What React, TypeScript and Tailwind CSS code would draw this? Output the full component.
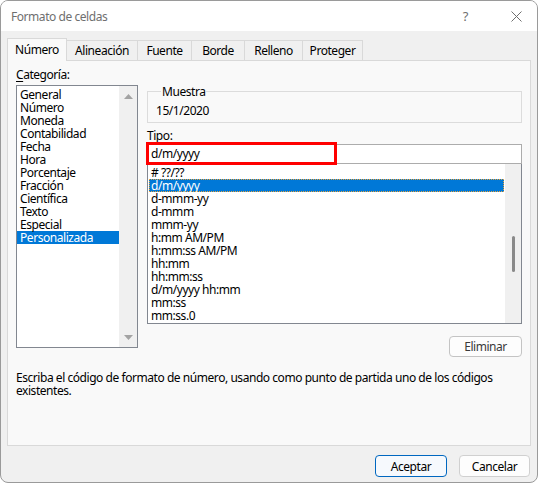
import React from 'react';

const categories = [
  'General',
  'Número',
  'Moneda',
  'Contabilidad',
  'Fecha',
  'Hora',
  'Porcentaje',
  'Fracción',
  'Científica',
  'Texto',
  'Especial',
  'Personalizada',
];

const formats = [
  '# ??/??',
  'd/m/yyyy',
  'd-mmm-yy',
  'd-mmm',
  'mmm-yy',
  'h:mm AM/PM',
  'h:mm:ss AM/PM',
  'hh:mm',
  'hh:mm:ss',
  'd/m/yyyy hh:mm',
  'mm:ss',
  'mm:ss.0',
];

const tabs = [
  { label: 'Número', w: 'w-[60px]' },
  { label: 'Alineación', w: 'w-[71px]' },
  { label: 'Fuente', w: 'w-[54px]' },
  { label: 'Borde', w: 'w-[53px]' },
  { label: 'Relleno', w: 'w-[58px]' },
  { label: 'Proteger', w: 'w-[60px]' },
];

const Triangle: React.FC<{ down?: boolean }> = ({ down }) => (
  <svg width="9" height="5" viewBox="0 0 9 5">
    {down ? <polygon points="0,0 9,0 4.5,5" fill="#a3a3a3" /> : <polygon points="0,5 9,5 4.5,0" fill="#a3a3a3" />}
  </svg>
);

export default function App() {
  return (
    <div className="w-[540px] h-[484px] bg-white text-[12px] leading-[13px] tracking-[-0.45px] text-black font-['Segoe_UI','Noto_Sans',sans-serif]">
      <div className="w-[538px] h-[483px] border border-[#9a9a9a] rounded-[8px] overflow-hidden flex flex-col bg-[#f0f0f0]">
        {/* Title bar */}
        <div className="h-[30px] shrink-0 bg-white flex items-center pl-[10px] pr-[15px] text-[#6f6f6f]">
          <span className="flex-1">Formato de celdas</span>
          <span className="mr-[43px] text-[13px]">?</span>
          <svg width="11" height="11" viewBox="0 0 11 11">
            <path d="M0.5 0.5 L10.5 10.5 M10.5 0.5 L0.5 10.5" stroke="#6f6f6f" strokeWidth="1" />
          </svg>
        </div>

        {/* Body */}
        <div className="flex-1 pl-[6px] pr-[6px] pt-[7px] flex flex-col">
          {/* Tabs */}
          <div className="flex items-end relative z-10 -mb-px">
            {tabs.map((t, i) =>
              i === 0 ? (
                <div
                  key={t.label}
                  className={`${t.w} h-[23px] bg-[#f9f9f9] border border-b-0 border-[#d9d9d9] flex items-center justify-center pb-[2px]`}
                >
                  {t.label}
                </div>
              ) : (
                <div
                  key={t.label}
                  className={`${t.w} h-[21px] bg-[#f0f0f0] border border-l-0 border-[#d9d9d9] flex items-center justify-center`}
                >
                  {t.label}
                </div>
              )
            )}
          </div>

          {/* Panel */}
          <div className="h-[386px] border border-[#d9d9d9] bg-[#f9f9f9] px-[8px] pt-[7px]">
            <div className="flex gap-[9px]">
              {/* Category column */}
              <div className="w-[122px] flex flex-col">
                <div className="h-[13px] mb-[4px]">
                  <span className="underline underline-offset-2">C</span>ategoría:
                </div>
                <div className="h-[263px] border border-[#828790] bg-white flex">
                  <div className="flex-1 pt-[2px]">
                    {categories.map((c) => (
                      <div
                        key={c}
                        className={`h-[13px] pl-[3px] ${c === 'Personalizada' ? 'bg-[#0078d7] text-white' : ''}`}
                      >
                        {c}
                      </div>
                    ))}
                  </div>
                  <div className="w-[18px] bg-[#f0f0f0] flex flex-col items-center justify-between pt-[8px] pb-[7px]">
                    <Triangle />
                    <Triangle down />
                  </div>
                </div>
              </div>

              {/* Right column */}
              <div className="w-[375px] flex flex-col pt-[17px]">
                <fieldset className="border border-[#dcdcdc] pl-[8px] pb-[5px]">
                  <legend className="ml-[5px] px-[1px] leading-[13px]">Muestra</legend>
                  <div className="pt-[6px]">15/1/2020</div>
                </fieldset>

                <div className="mt-[6px] h-[13px]">
                  Tip<span className="underline underline-offset-2">o</span>:
                </div>

                <div className="relative mt-[2px]">
                  <div className="h-[20px] border border-[#acacac] bg-white pl-[3px] leading-[18px]">d/m/yyyy</div>
                  <div className="absolute -left-px -top-[2px] w-[191px] h-[23px] border-[3px] border-[#ff0000]" />
                </div>

                <div className="h-[160px] border border-t-0 border-[#828790] bg-white flex">
                  <div className="flex-1 pt-[2px] px-[1px]">
                    {formats.map((f) => (
                      <div
                        key={f}
                        className={`h-[13px] pl-[2px] ${
                          f === 'd/m/yyyy' ? 'bg-[#0078d7] text-white outline-1 outline-dotted outline-[#e8a33c] -outline-offset-1' : ''
                        }`}
                      >
                        {f}
                      </div>
                    ))}
                  </div>
                  <div className="w-[16px] bg-[#f0f0f0] relative">
                    <div className="absolute left-[7px] top-[72px] w-[3px] h-[36px] rounded-full bg-[#8a8a8a]" />
                  </div>
                </div>

                <div className="flex justify-end mt-[12px]">
                  <div className="w-[73px] h-[21px] border border-[#c4c4c4] rounded-[4px] bg-[#fdfdfd] flex items-center justify-center text-[#3a3a3a]">
                    Eliminar
                  </div>
                </div>
              </div>
            </div>

            <div className="mt-[14px] leading-[13px]">
              Escriba el código de formato de número, usando como punto de partida uno de los códigos
              <br />
              existentes.
            </div>
          </div>

          {/* Buttons */}
          <div className="flex justify-end gap-[12px] pt-[9px] pr-[1px]">
            <div className="w-[72px] h-[22px] border border-[#0067c0] rounded-[4px] bg-[#f6f9fd] flex items-center justify-center">
              Aceptar
            </div>
            <div className="w-[71px] h-[22px] border border-[#d0d0d0] rounded-[4px] bg-[#fdfdfd] flex items-center justify-center">
              Cancelar
            </div>
          </div>
        </div>
      </div>
    </div>
  );
}
